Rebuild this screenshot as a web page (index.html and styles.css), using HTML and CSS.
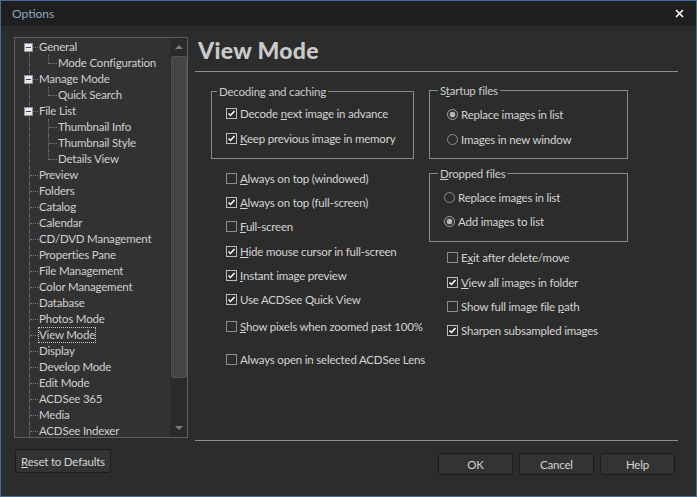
FILE: index.html
```html
<!DOCTYPE html>
<html>
<head>
<meta charset="utf-8">
<title>Options</title>
<link rel="stylesheet" href="styles.css">
</head>
<body>
<div class="window">
  <div class="titlebar">
    <span class="title">Options</span>
    <svg class="close" viewBox="0 0 9 9"><path d="M1 1 8 8M8 1 1 8" stroke="#fff" stroke-width="1.6"/></svg>
  </div>
  <div class="body">
    <div class="left">
      <div class="tree">
        <div class="items">
          <div class="node"><span class="g0"><i class="vl first"></i><i class="hl"></i><b class="xbox"></b></span><span class="lbl">General</span></div>
          <div class="node"><span class="g0"><i class="vl"></i></span><span class="g1"><i class="vl last"></i><i class="hl"></i></span><span class="lbl">Mode Configuration</span></div>
          <div class="node"><span class="g0"><i class="vl"></i><i class="hl"></i><b class="xbox"></b></span><span class="lbl">Manage Mode</span></div>
          <div class="node"><span class="g0"><i class="vl"></i></span><span class="g1"><i class="vl last"></i><i class="hl"></i></span><span class="lbl">Quick Search</span></div>
          <div class="node"><span class="g0"><i class="vl"></i><i class="hl"></i><b class="xbox"></b></span><span class="lbl">File List</span></div>
          <div class="node"><span class="g0"><i class="vl"></i></span><span class="g1"><i class="vl"></i><i class="hl"></i></span><span class="lbl">Thumbnail Info</span></div>
          <div class="node"><span class="g0"><i class="vl"></i></span><span class="g1"><i class="vl"></i><i class="hl"></i></span><span class="lbl">Thumbnail Style</span></div>
          <div class="node"><span class="g0"><i class="vl"></i></span><span class="g1"><i class="vl last"></i><i class="hl"></i></span><span class="lbl">Details View</span></div>
          <div class="node"><span class="g0"><i class="vl"></i><i class="hl"></i></span><span class="lbl">Preview</span></div>
          <div class="node"><span class="g0"><i class="vl"></i><i class="hl"></i></span><span class="lbl">Folders</span></div>
          <div class="node"><span class="g0"><i class="vl"></i><i class="hl"></i></span><span class="lbl">Catalog</span></div>
          <div class="node"><span class="g0"><i class="vl"></i><i class="hl"></i></span><span class="lbl">Calendar</span></div>
          <div class="node"><span class="g0"><i class="vl"></i><i class="hl"></i></span><span class="lbl">CD/DVD Management</span></div>
          <div class="node"><span class="g0"><i class="vl"></i><i class="hl"></i></span><span class="lbl">Properties Pane</span></div>
          <div class="node"><span class="g0"><i class="vl"></i><i class="hl"></i></span><span class="lbl">File Management</span></div>
          <div class="node"><span class="g0"><i class="vl"></i><i class="hl"></i></span><span class="lbl">Color Management</span></div>
          <div class="node"><span class="g0"><i class="vl"></i><i class="hl"></i></span><span class="lbl">Database</span></div>
          <div class="node"><span class="g0"><i class="vl"></i><i class="hl"></i></span><span class="lbl">Photos Mode</span></div>
          <div class="node"><span class="g0"><i class="vl"></i><i class="hl"></i></span><span class="lbl sel">View Mode</span></div>
          <div class="node"><span class="g0"><i class="vl"></i><i class="hl"></i></span><span class="lbl">Display</span></div>
          <div class="node"><span class="g0"><i class="vl"></i><i class="hl"></i></span><span class="lbl">Develop Mode</span></div>
          <div class="node"><span class="g0"><i class="vl"></i><i class="hl"></i></span><span class="lbl">Edit Mode</span></div>
          <div class="node"><span class="g0"><i class="vl"></i><i class="hl"></i></span><span class="lbl">ACDSee 365</span></div>
          <div class="node"><span class="g0"><i class="vl"></i><i class="hl"></i></span><span class="lbl">Media</span></div>
          <div class="node"><span class="g0"><i class="vl"></i><i class="hl"></i></span><span class="lbl">ACDSee Indexer</span></div>
        </div>
        <div class="scroll">
          <div class="sbtn"><i class="up"></i></div>
          <div class="thumb"></div>
          <div class="strack"></div>
          <div class="sbtn"><i class="down"></i></div>
        </div>
      </div>
      <button class="btn reset"><u>R</u>eset to Defaults</button>
    </div>

    <div class="right">
      <h1 class="heading">View Mode</h1>
      <div class="sep"></div>
      <div class="content">
        <div class="col colL">
          <fieldset class="grp decode">
            <legend>Decoding and caching</legend>
            <div class="opt"><span class="cb on"><svg viewBox="0 0 9 9"><path d="M1.5 4.5 3.5 6.5 7.5 2" fill="none" stroke="#fff" stroke-width="1.5"/></svg></span><span>Decode <u>n</u>ext image in advance</span></div>
            <div class="opt"><span class="cb on"><svg viewBox="0 0 9 9"><path d="M1.5 4.5 3.5 6.5 7.5 2" fill="none" stroke="#fff" stroke-width="1.5"/></svg></span><span><u>K</u>eep previous image in memory</span></div>
          </fieldset>
          <div class="checks checksL">
            <div class="opt"><span class="cb"></span><span><u>A</u>lways on top (windowed)</span></div>
            <div class="opt"><span class="cb on"><svg viewBox="0 0 9 9"><path d="M1.5 4.5 3.5 6.5 7.5 2" fill="none" stroke="#fff" stroke-width="1.5"/></svg></span><span><u>A</u>lways on top (full-screen)</span></div>
            <div class="opt"><span class="cb"></span><span><u>F</u>ull-screen</span></div>
            <div class="opt s1"><span class="cb on"><svg viewBox="0 0 9 9"><path d="M1.5 4.5 3.5 6.5 7.5 2" fill="none" stroke="#fff" stroke-width="1.5"/></svg></span><span><u>H</u>ide mouse cursor in full-screen</span></div>
            <div class="opt"><span class="cb on"><svg viewBox="0 0 9 9"><path d="M1.5 4.5 3.5 6.5 7.5 2" fill="none" stroke="#fff" stroke-width="1.5"/></svg></span><span><u>I</u>nstant image preview</span></div>
            <div class="opt"><span class="cb on"><svg viewBox="0 0 9 9"><path d="M1.5 4.5 3.5 6.5 7.5 2" fill="none" stroke="#fff" stroke-width="1.5"/></svg></span><span>Use ACDSee Quick View</span></div>
            <div class="opt s3"><span class="cb"></span><span><u>S</u>how pixels when zoomed past 100%</span></div>
            <div class="opt s9"><span class="cb"></span><span>Always open in selected ACDSee Lens</span></div>
          </div>
        </div>
        <div class="col colR">
          <fieldset class="grp startup">
            <legend>S<u>t</u>artup files</legend>
            <div class="opt"><span class="rb on"></span><span>Replace images in list</span></div>
            <div class="opt"><span class="rb"></span><span>Images in new window</span></div>
          </fieldset>
          <fieldset class="grp dropped">
            <legend><u>D</u>ropped files</legend>
            <div class="opt"><span class="rb"></span><span>Replace images in list</span></div>
            <div class="opt"><span class="rb on"></span><span>Add images to list</span></div>
          </fieldset>
          <div class="checks checksR">
            <div class="opt"><span class="cb"></span><span>E<u>x</u>it after delete/move</span></div>
            <div class="opt s1"><span class="cb on"><svg viewBox="0 0 9 9"><path d="M1.5 4.5 3.5 6.5 7.5 2" fill="none" stroke="#fff" stroke-width="1.5"/></svg></span><span><u>V</u>iew all images in folder</span></div>
            <div class="opt"><span class="cb"></span><span>Show full image file <u>p</u>ath</span></div>
            <div class="opt"><span class="cb on"><svg viewBox="0 0 9 9"><path d="M1.5 4.5 3.5 6.5 7.5 2" fill="none" stroke="#fff" stroke-width="1.5"/></svg></span><span>Sharpen subsampled images</span></div>
          </div>
        </div>
      </div>
      <div class="sep"></div>
      <div class="buttons">
        <button class="btn">OK</button>
        <button class="btn">Cancel</button>
        <button class="btn">Help</button>
      </div>
    </div>
  </div>
</div>
</body>
</html>
```

FILE: styles.css
```css
* { box-sizing: border-box; }
html, body { margin: 0; padding: 0; background: #2c2c2c; }
body {
  font-family: Lato, "Liberation Sans", sans-serif;
  font-size: 11.5px;
  letter-spacing: -0.2px;
  color: #d4d4d4;
}
u { text-decoration: underline; text-underline-offset: 1px; }

.window {
  width: 697px;
  height: 497px;
  border: 1px solid #4a6b90;
  background: #2c2c2c;
  display: flex;
  flex-direction: column;
}

.titlebar {
  height: 25px;
  flex: none;
  background: #1f1f1f;
  display: flex;
  align-items: center;
  justify-content: space-between;
  padding: 0 12px 0 11px;
}
.title { color: #8ea6c4; font-size: 12px; letter-spacing: 0; }
.close { width: 9px; height: 9px; display: block; }

.body {
  flex: 1;
  display: flex;
  gap: 7px;
  padding: 11px 18px 21px 13px;
}

/* ---------- left column ---------- */
.left {
  width: 174px;
  flex: none;
  display: flex;
  flex-direction: column;
  gap: 11px;
}
.tree {
  height: 401px;
  border: 1px solid #5e5e5e;
  background: #323232;
  display: flex;
}
.items {
  flex: 1;
  padding-top: 1px;
  overflow: hidden;
  color: #d0d0d0;
}
.node {
  display: flex;
  height: 16px;
  align-items: stretch;
  white-space: nowrap;
}
.g0, .g1 {
  display: grid;
  grid-template-rows: 9px 7px;
  flex: none;
}
.g0 { width: 23px; grid-template-columns: 15px 8px; }
.g1 { width: 19px; grid-template-columns: 11px 8px; }
.vl {
  grid-column: 1;
  grid-row: 1 / 3;
  border-right: 1px dotted #767676;
}
.vl.first { grid-row: 2 / 3; }
.vl.last { grid-row: 1 / 2; }
.hl {
  grid-column: 2;
  grid-row: 1;
  border-bottom: 1px dotted #767676;
}
.xbox {
  grid-column: 1 / 3;
  grid-row: 1 / 3;
  width: 9px;
  height: 9px;
  margin-left: 9px;
  align-self: center;
  border: 1px solid #909090;
  background: linear-gradient(#2a49a0, #2a49a0) center / 5px 1px no-repeat, #ececec;
}
.lbl {
  padding: 0 1px;
  line-height: 16px;
  height: 16px;
}
.lbl.sel { outline: 1px dotted #c8c8c8; outline-offset: -1px; }

.scroll {
  width: 17px;
  flex: none;
  background: #2a2a2a;
  display: flex;
  flex-direction: column;
  align-items: center;
}
.sbtn {
  height: 18px;
  width: 17px;
  display: flex;
  align-items: center;
  justify-content: center;
  flex: none;
}
.up {
  width: 0; height: 0;
  border-left: 4px solid transparent;
  border-right: 4px solid transparent;
  border-bottom: 4px solid #7e7e7e;
}
.down {
  width: 0; height: 0;
  border-left: 4px solid transparent;
  border-right: 4px solid transparent;
  border-top: 4px solid #7e7e7e;
}
.thumb {
  width: 16px;
  height: 322px;
  flex: none;
  background: #454545;
  border: 1px solid #525252;
  border-radius: 2px;
}
.strack { flex: 1; }

.btn {
  font-family: Lato, "Liberation Sans", sans-serif;
  font-size: 11.5px;
  letter-spacing: -0.2px;
  color: #d4d4d4;
  background: #333333;
  border: 1px solid #1c1c1c;
  border-radius: 3px;
  width: 75px;
  height: 22px;
  padding: 0;
}
.reset {
  width: 96px;
  height: 24px;
  margin-left: 1px;
}

/* ---------- right column ---------- */
.right {
  flex: 1;
  display: flex;
  flex-direction: column;
}
.heading {
  margin: 0 0 8px;
  height: 26px;
  line-height: 26px;
  font-size: 23px;
  font-weight: 900;
  letter-spacing: 0.3px;
  color: #cacaca;
  padding-left: 3px;
}
.sep { height: 1px; background: #8d8d8d; flex: none; }
.content {
  flex: 1;
  display: grid;
  grid-template-columns: 203px 199px;
  column-gap: 15px;
  padding-left: 16px;
  align-content: start;
}
.col { display: flex; flex-direction: column; }
.colL { padding-top: 12px; }
.colR { padding-top: 11px; }

.grp {
  margin: 0;
  border: 1px solid #8a8a8a;
  display: flex;
  flex-direction: column;
  min-width: 0;
}
.grp legend {
  line-height: 15px;
  height: 15px;
  padding: 0 2px;
  color: #cdcdcd;
}
.decode { padding: 6px 0 12px 14px; gap: 9px; }
.decode legend { margin-left: -9px; }
.startup { padding: 8px 0 11px 17px; gap: 9px; }
.startup legend { margin-left: -9px; }
.dropped { margin-top: 7px; padding: 8px 0 12px 14px; gap: 8px; }
.dropped legend { margin-left: -6px; }

.opt {
  display: flex;
  align-items: center;
  gap: 3px;
  height: 16px;
  white-space: nowrap;
}
.cb {
  width: 11px;
  height: 11px;
  flex: none;
  border: 1px solid #8c8c8c;
  display: flex;
  align-items: center;
  justify-content: center;
}
.cb.on { border-color: #bdbdbd; }
.cb svg { width: 9px; height: 9px; display: block; }
.rb {
  width: 11px;
  height: 11px;
  flex: none;
  border: 1px solid #8c8c8c;
  border-radius: 50%;
}
.rb.on {
  border-color: #a8a8a8;
  background: radial-gradient(circle, #b4b4b4 0 2.6px, transparent 3.2px);
}

.checks { display: flex; flex-direction: column; gap: 8px; }
.checksL { margin-top: 11px; padding-left: 15px; }
.checksR { margin-top: 7px; padding-left: 18px; }
.s1 { margin-top: 1px; }
.s3 { margin-top: 3px; }
.s9 { margin-top: 9px; }

.buttons {
  display: flex;
  justify-content: flex-end;
  gap: 6px;
  margin-top: 12px;
  padding-right: 3px;
}
```
